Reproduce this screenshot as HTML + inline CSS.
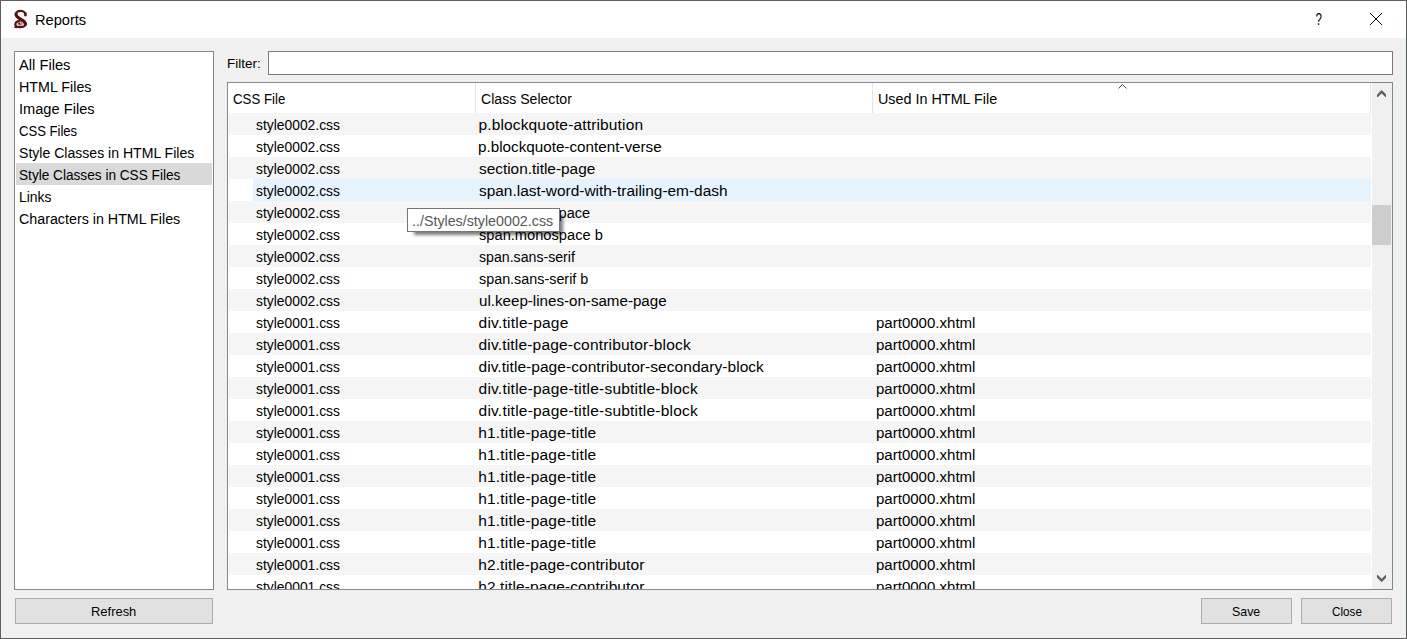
<!DOCTYPE html>
<html lang="en"><head><meta charset="utf-8"><title>Reports</title>
<style>
html,body{margin:0;padding:0;}
body{width:1407px;height:639px;overflow:hidden;background:#f0f0f0;font-family:"Liberation Sans",sans-serif;color:#000;}
#win{position:absolute;left:0;top:0;width:1407px;height:639px;background:#f0f0f0;overflow:hidden;}
#win:before{content:"";position:absolute;left:0;top:0;width:1405px;height:637px;border:1px solid #5f5f5f;border-right-color:#4f5958;z-index:20;pointer-events:none;}
.t{position:absolute;left:0;top:0;white-space:nowrap;display:block;transform-origin:0 0;}
#titlebar{position:absolute;left:1px;top:1px;width:1405px;height:37px;background:#fff;}
#title{position:absolute;left:0;top:9px;height:20px;line-height:20px;font-size:15.5px;}
#logo{position:absolute;left:7px;top:3px;}
#help{position:absolute;left:1308px;top:0;width:20px;text-align:center;height:37px;line-height:36px;font-size:16.5px;}
#help span{display:inline-block;transform:scaleX(.7);}
#closex{position:absolute;left:1368px;top:11px;}
#nav{position:absolute;left:14px;top:51px;width:198px;height:537px;border:1px solid #828790;background:#fff;}
#nav div{position:absolute;left:-15px;width:0;height:22px;line-height:22px;font-size:15.5px;}
#nav .t{top:1px}
#nav div.sel:before{content:"";position:absolute;left:16px;top:0;width:196px;height:22px;background:#d9d9d9;}
#nav div:nth-child(1){top:1px}#nav div:nth-child(2){top:23px}#nav div:nth-child(3){top:45px}#nav div:nth-child(4){top:67px}
#nav div:nth-child(5){top:89px}#nav div:nth-child(6){top:111px}#nav div:nth-child(7){top:133px}#nav div:nth-child(8){top:155px}
#flabel{position:absolute;left:0;top:52px;height:24px;line-height:24px;font-size:13.5px;}
#finput{position:absolute;left:268px;top:51px;width:1123px;height:22px;border:1px solid #7a7a7a;background:#fff;}
#table{position:absolute;left:227px;top:82px;width:1164px;height:506px;border:1px solid #828790;background:#fff;overflow:hidden;}
#thead{position:absolute;left:0;top:0;width:1143px;height:30px;background:#fff;}
.hc{position:absolute;left:-228px;top:1px;height:30px;line-height:30px;font-size:15.5px;}
.sep{position:absolute;top:0;width:1px;height:30px;background:#e5e5e5;}
#sortarrow{position:absolute;left:889px;top:0px;}
#tbody{position:absolute;left:0;top:30px;width:1143px;height:476px;overflow:hidden;}
.r{position:relative;height:22px;line-height:22px;font-size:15.5px;}
.r.alt:before{content:"";position:absolute;left:1px;top:0;width:1142px;height:22px;background:#f5f5f5;}
.r.hov:before{content:"";position:absolute;left:25px;top:0;width:1118px;height:22px;background:#e5f3ff;}
.r div{position:absolute;left:-228px;top:1px;height:22px;}
#sb{position:absolute;left:1144px;top:0;width:19px;height:506px;background:#f0f0f0;border-right:1px solid #f0f0f0;}
#thumb{position:absolute;left:0;top:122px;width:19px;height:40px;background:#cdcdcd;}
#tip{position:absolute;left:407px;top:208px;width:151px;height:22px;border:1px solid #767676;background:#fff;color:#575757;font-size:15.5px;line-height:22px;box-shadow:5px 5px 3px -2px rgba(0,0,0,.5);z-index:5;}
#tip .t{left:-408px;top:1px;}
.btn{position:absolute;top:598px;height:24px;border:1px solid #adadad;background:#e1e1e1;font-size:13.5px;line-height:24px;}
.btn .t{top:1px;}
#b1{left:15px;width:196px}#b2{left:1201px;width:89px}#b3{left:1301px;width:89px}
#b1 .t{left:-16px}#b2 .t{left:-1202px}#b3 .t{left:-1302px}
</style></head>
<body>
<div id="win">
<div id="titlebar">
<svg id="logo" width="26" height="30" viewBox="0 0 26 30">
<ellipse cx="12.2" cy="19.9" rx="4.6" ry="3.2" fill="#e2cdcd"/>
<path d="M17.5 12 C17.9 8.6 15.6 6.9 12.8 6.9 C10.2 6.9 8.1 8.2 8 10.4" fill="none" stroke="#5a1515" stroke-width="2.1" stroke-linecap="butt"/>
<path d="M16.3 8.6 L18.6 8.2 L18.3 12.4 L16.4 12.2 Z" fill="#5a1515"/>
<path d="M8 10 C7.9 12.8 10.4 14 13 15.4 C15.6 16.8 17.6 18.2 17.5 20.4" fill="none" stroke="#4f1010" stroke-width="3.1" stroke-linecap="round"/>
<path d="M17.6 20 C17.5 22.8 15 23.1 12.2 23.1 C9.4 23.1 7.3 22.9 7.3 20.4 C7.3 18 9.3 16.9 11.5 17.1" fill="none" stroke="#551313" stroke-width="2.2" stroke-linecap="round" stroke-linejoin="round"/>
<path d="M6.4 23.9 L9.5 24.2 L7 21 Z" fill="#551313"/>
<path d="M11.5 17.2 C13.4 17.4 14.5 18.8 13.9 20.1 C13.3 21.3 11.3 21.3 10.9 20.2" fill="none" stroke="#8a5252" stroke-width="1" stroke-linecap="round"/>
<circle cx="11.3" cy="19.6" r="1.05" fill="#470d0d"/>
</svg>
<div id="title" style="left:-1px"><span class="t" style="margin-left:34.59px;transform:scaleX(0.9430)">Reports</span></div>
<div id="help"><span>?</span></div>
<svg id="closex" width="14" height="14" viewBox="0 0 14 14"><path d="M1 1 L13 13 M13 1 L1 13" stroke="#000" stroke-width="1" fill="none"/></svg>
</div>
<div id="nav">
<div><span class="t" style="margin-left:18.70px;transform:scaleX(0.9484)">All Files</span></div>
<div><span class="t" style="margin-left:18.73px;transform:scaleX(0.9218)">HTML Files</span></div>
<div><span class="t" style="margin-left:18.97px;transform:scaleX(0.9433)">Image Files</span></div>
<div><span class="t" style="margin-left:19.13px;transform:scaleX(0.8438)">CSS Files</span></div>
<div><span class="t" style="margin-left:19.20px;transform:scaleX(0.9071)">Style Classes in HTML Files</span></div>
<div class="sel"><span class="t" style="margin-left:19.20px;transform:scaleX(0.8796)">Style Classes in CSS Files</span></div>
<div><span class="t" style="margin-left:18.65px;transform:scaleX(0.8985)">Links</span></div>
<div><span class="t" style="margin-left:19.16px;transform:scaleX(0.9207)">Characters in HTML Files</span></div>
</div>
<div id="flabel"><span class="t" style="margin-left:227.17px;transform:scaleX(0.9983)">Filter:</span></div><div id="finput"></div>
<div id="table">
<div id="thead"><div class="hc"><span class="t" style="margin-left:233.41px;transform:scaleX(0.8547)">CSS File</span></div><div class="hc"><span class="t" style="margin-left:481.16px;transform:scaleX(0.9091)">Class Selector</span></div><div class="hc"><span class="t" style="margin-left:878.20px;transform:scaleX(0.9268)">Used In HTML File</span></div><svg id="sortarrow" width="11" height="8" viewBox="0 0 11 8"><path d="M1.5 5.5 L5.5 1.5 L9.5 5.5" fill="none" stroke="#505050" stroke-width="1"/></svg>
<i class="sep" style="left:247px"></i><i class="sep" style="left:644px"></i><i class="sep" style="left:1142px"></i></div>
<div id="tbody">
<div class="r alt"><div><span class="t" style="margin-left:256.17px;transform:scaleX(0.8938)">style0002.css</span></div><div><span class="t" style="margin-left:478.44px;letter-spacing:0.150px">p.blockquote-attribution</span></div><div></div></div>
<div class="r"><div><span class="t" style="margin-left:256.17px;transform:scaleX(0.8938)">style0002.css</span></div><div><span class="t" style="margin-left:478.48px;transform:scaleX(0.9824)">p.blockquote-content-verse</span></div><div></div></div>
<div class="r alt"><div><span class="t" style="margin-left:256.17px;transform:scaleX(0.8938)">style0002.css</span></div><div><span class="t" style="margin-left:479.05px;transform:scaleX(0.9920)">section.title-page</span></div><div></div></div>
<div class="r hov"><div><span class="t" style="margin-left:256.17px;transform:scaleX(0.8938)">style0002.css</span></div><div><span class="t" style="margin-left:479.05px;transform:scaleX(0.9949)">span.last-word-with-trailing-em-dash</span></div><div></div></div>
<div class="r alt"><div><span class="t" style="margin-left:256.17px;transform:scaleX(0.8938)">style0002.css</span></div><div><span class="t" style="margin-left:479.05px;transform:scaleX(0.9422)">span.monospace</span></div><div></div></div>
<div class="r"><div><span class="t" style="margin-left:256.17px;transform:scaleX(0.8938)">style0002.css</span></div><div><span class="t" style="margin-left:479.05px;transform:scaleX(0.9455)">span.monospace b</span></div><div></div></div>
<div class="r alt"><div><span class="t" style="margin-left:256.17px;transform:scaleX(0.8938)">style0002.css</span></div><div><span class="t" style="margin-left:479.01px;transform:scaleX(0.9123)">span.sans-serif</span></div><div></div></div>
<div class="r"><div><span class="t" style="margin-left:256.17px;transform:scaleX(0.8938)">style0002.css</span></div><div><span class="t" style="margin-left:479.19px;transform:scaleX(0.9260)">span.sans-serif b</span></div><div></div></div>
<div class="r alt"><div><span class="t" style="margin-left:256.17px;transform:scaleX(0.8938)">style0002.css</span></div><div><span class="t" style="margin-left:478.68px;transform:scaleX(0.9764)">ul.keep-lines-on-same-page</span></div><div></div></div>
<div class="r"><div><span class="t" style="margin-left:256.17px;transform:scaleX(0.8938)">style0001.css</span></div><div><span class="t" style="margin-left:478.60px;letter-spacing:0.228px">div.title-page</span></div><div><span class="t" style="margin-left:876.01px;transform:scaleX(0.9697)">part0000.xhtml</span></div></div>
<div class="r alt"><div><span class="t" style="margin-left:256.17px;transform:scaleX(0.8938)">style0001.css</span></div><div><span class="t" style="margin-left:478.54px;letter-spacing:0.183px">div.title-page-contributor-block</span></div><div><span class="t" style="margin-left:876.01px;transform:scaleX(0.9697)">part0000.xhtml</span></div></div>
<div class="r"><div><span class="t" style="margin-left:256.17px;transform:scaleX(0.8938)">style0001.css</span></div><div><span class="t" style="margin-left:478.48px;letter-spacing:0.055px">div.title-page-contributor-secondary-block</span></div><div><span class="t" style="margin-left:876.01px;transform:scaleX(0.9697)">part0000.xhtml</span></div></div>
<div class="r alt"><div><span class="t" style="margin-left:256.17px;transform:scaleX(0.8938)">style0001.css</span></div><div><span class="t" style="margin-left:478.54px;letter-spacing:0.224px">div.title-page-title-subtitle-block</span></div><div><span class="t" style="margin-left:876.01px;transform:scaleX(0.9697)">part0000.xhtml</span></div></div>
<div class="r"><div><span class="t" style="margin-left:256.17px;transform:scaleX(0.8938)">style0001.css</span></div><div><span class="t" style="margin-left:478.54px;letter-spacing:0.224px">div.title-page-title-subtitle-block</span></div><div><span class="t" style="margin-left:876.01px;transform:scaleX(0.9697)">part0000.xhtml</span></div></div>
<div class="r alt"><div><span class="t" style="margin-left:256.17px;transform:scaleX(0.8938)">style0001.css</span></div><div><span class="t" style="margin-left:478.28px;letter-spacing:0.182px">h1.title-page-title</span></div><div><span class="t" style="margin-left:876.01px;transform:scaleX(0.9697)">part0000.xhtml</span></div></div>
<div class="r"><div><span class="t" style="margin-left:256.17px;transform:scaleX(0.8938)">style0001.css</span></div><div><span class="t" style="margin-left:478.28px;letter-spacing:0.182px">h1.title-page-title</span></div><div><span class="t" style="margin-left:876.01px;transform:scaleX(0.9697)">part0000.xhtml</span></div></div>
<div class="r alt"><div><span class="t" style="margin-left:256.17px;transform:scaleX(0.8938)">style0001.css</span></div><div><span class="t" style="margin-left:478.28px;letter-spacing:0.182px">h1.title-page-title</span></div><div><span class="t" style="margin-left:876.01px;transform:scaleX(0.9697)">part0000.xhtml</span></div></div>
<div class="r"><div><span class="t" style="margin-left:256.17px;transform:scaleX(0.8938)">style0001.css</span></div><div><span class="t" style="margin-left:478.28px;letter-spacing:0.182px">h1.title-page-title</span></div><div><span class="t" style="margin-left:876.01px;transform:scaleX(0.9697)">part0000.xhtml</span></div></div>
<div class="r alt"><div><span class="t" style="margin-left:256.17px;transform:scaleX(0.8938)">style0001.css</span></div><div><span class="t" style="margin-left:478.28px;letter-spacing:0.182px">h1.title-page-title</span></div><div><span class="t" style="margin-left:876.01px;transform:scaleX(0.9697)">part0000.xhtml</span></div></div>
<div class="r"><div><span class="t" style="margin-left:256.17px;transform:scaleX(0.8938)">style0001.css</span></div><div><span class="t" style="margin-left:478.28px;letter-spacing:0.182px">h1.title-page-title</span></div><div><span class="t" style="margin-left:876.01px;transform:scaleX(0.9697)">part0000.xhtml</span></div></div>
<div class="r alt"><div><span class="t" style="margin-left:256.17px;transform:scaleX(0.8938)">style0001.css</span></div><div><span class="t" style="margin-left:478.28px;letter-spacing:0.100px">h2.title-page-contributor</span></div><div><span class="t" style="margin-left:876.01px;transform:scaleX(0.9697)">part0000.xhtml</span></div></div>
<div class="r"><div><span class="t" style="margin-left:256.17px;transform:scaleX(0.8938)">style0001.css</span></div><div><span class="t" style="margin-left:478.28px;letter-spacing:0.100px">h2.title-page-contributor</span></div><div><span class="t" style="margin-left:876.01px;transform:scaleX(0.9697)">part0000.xhtml</span></div></div>
</div>
<div id="sb">
<svg style="position:absolute;left:5px;top:7px" width="9.3" height="7.2" viewBox="0 0 9.3 7.2"><path d="M-1.2 7.55 L4.65 1.7 L10.5 7.55" fill="none" stroke="#606060" stroke-width="2.4" stroke-linejoin="miter"/></svg>
<div id="thumb"></div>
<svg style="position:absolute;left:5px;top:492px" width="9.3" height="7.2" viewBox="0 0 9.3 7.2"><path d="M-1.2 -0.35 L4.65 5.5 L10.5 -0.35" fill="none" stroke="#606060" stroke-width="2.4" stroke-linejoin="miter"/></svg>
</div>
</div>
<div id="tip"><span class="t" style="margin-left:411.88px;transform:scaleX(0.9206)">../Styles/style0002.css</span></div>
<div class="btn" id="b1"><span class="t" style="margin-left:91.05px;transform:scaleX(0.9586)">Refresh</span></div><div class="btn" id="b2"><span class="t" style="margin-left:1232.36px;transform:scaleX(0.9185)">Save</span></div><div class="btn" id="b3"><span class="t" style="margin-left:1331.98px;transform:scaleX(0.8657)">Close</span></div>
</div>
</body></html>
